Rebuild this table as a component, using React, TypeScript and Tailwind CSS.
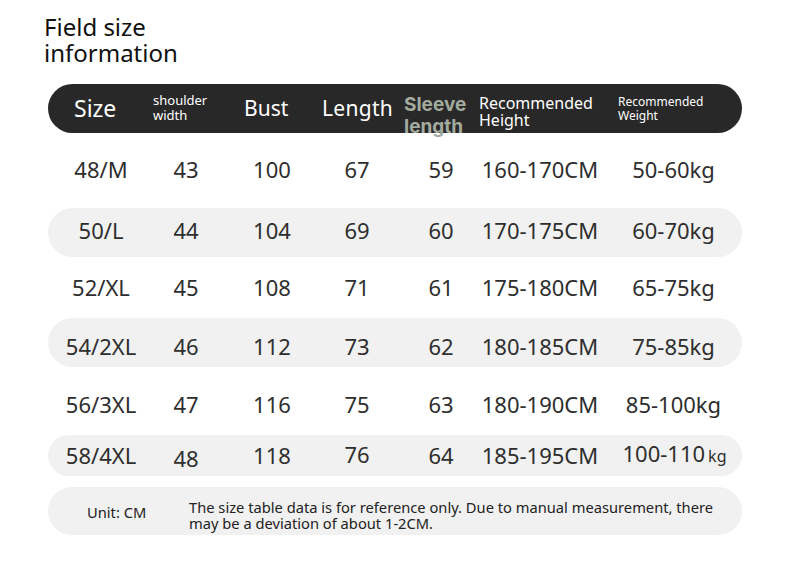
import React from 'react';

type Row = {
  size: string;
  shoulder: string;
  bust: string;
  length: string;
  sleeve: string;
  height: string;
  weight: React.ReactNode;
  shaded: boolean;
  rowClass: string;
};

const rows: Row[] = [
  { size: '48/M', shoulder: '43', bust: '100', length: '67', sleeve: '59', height: '160-170CM', weight: '50-60kg', shaded: false, rowClass: 'mt-[13px] h-[49px] pb-[2px]' },
  { size: '50/L', shoulder: '44', bust: '104', length: '69', sleeve: '60', height: '170-175CM', weight: '60-70kg', shaded: true, rowClass: 'mt-[13px] h-[49px] pb-[5px]' },
  { size: '52/XL', shoulder: '45', bust: '108', length: '71', sleeve: '61', height: '175-180CM', weight: '65-75kg', shaded: false, rowClass: 'mt-[7px] h-[49px] pb-[2px]' },
  { size: '54/2XL', shoulder: '46', bust: '112', length: '73', sleeve: '62', height: '180-185CM', weight: '75-85kg', shaded: true, rowClass: 'mt-[5px] h-[49px] pt-[8px]' },
  { size: '56/3XL', shoulder: '47', bust: '116', length: '75', sleeve: '63', height: '180-190CM', weight: '85-100kg', shaded: false, rowClass: 'mt-[14px] h-[49px] pb-[2px]' },
];

const cell = 'flex justify-center whitespace-nowrap';

function DataRow({ r }: { r: Row }) {
  return (
    <div
      className={`grid grid-cols-[106px_64px_108px_62px_106px_92px_155px] items-center rounded-full ${r.rowClass} ${r.shaded ? 'bg-[#f1f1f1]' : ''}`}
    >
      <div className={cell}>{r.size}</div>
      <div className={cell}>{r.shoulder}</div>
      <div className={cell}>{r.bust}</div>
      <div className={cell}>{r.length}</div>
      <div className={cell}>{r.sleeve}</div>
      <div className={cell}>{r.height}</div>
      <div className={`${cell} pl-[20px]`}>{r.weight}</div>
    </div>
  );
}

export default function App() {
  return (
    <div className="w-[790px] h-[570px] bg-white overflow-hidden font-['Noto_Sans',sans-serif]">
      <div className="pl-[44px] pt-[14px] text-[24px] leading-[26px] text-[#111]">
        Field size
        <br />
        information
      </div>

      <div className="mx-[48px] mt-[18px] text-[22px] text-[#2e2e2e]">
        <div className="grid grid-cols-[105px_91px_78px_83px_74px_139px_1fr] items-center h-[49px] rounded-full bg-[#282828] text-white">
          <div className="pl-[26px] text-[23px] -mt-[5px]">Size</div>
          <div className="text-[13px] leading-[15px] -mt-[6px]">
            shoulder
            <br />
            width
          </div>
          <div className="text-[21px] -mt-[5px]">Bust</div>
          <div className="text-[21px] tracking-[0.3px] -mt-[5px]">Length</div>
          <div className="font-['Inter',sans-serif] font-bold text-[19px] leading-[22px] text-[#a3ab9f] pt-[10px] -ml-[1px]">
            Sleeve
            <br />
            length
          </div>
          <div className="text-[16px] leading-[17px] pt-[1px]">
            Recommended
            <br />
            Height
          </div>
          <div className="text-[12px] leading-[14px] -mt-[5px]">
            Recommended
            <br />
            Weight
          </div>
        </div>

        {rows.map((r) => (
          <DataRow key={r.size} r={r} />
        ))}

        <div className="mt-[5px] h-[41px] grid grid-cols-[106px_64px_108px_62px_106px_92px_155px] items-center rounded-full bg-[#f1f1f1]">
          <div className={cell}>58/4XL</div>
          <div className={`${cell} translate-y-[3px]`}>48</div>
          <div className={cell}>118</div>
          <div className={`${cell} -translate-y-[1px]`}>76</div>
          <div className={cell}>64</div>
          <div className={cell}>185-195CM</div>
          <div className={`${cell} pl-[22px] -translate-y-[2px] items-baseline`}>
            100-110<span className="text-[16px] ml-[3px]">kg</span>
          </div>
        </div>

        <div className="mt-[11px] h-[48px] flex items-center rounded-full bg-[#f1f1f1] text-[14.7px] leading-[16px] text-[#222]">
          <div className="w-[141px] pl-[39px] pt-[1px]">Unit: CM</div>
          <div className="pt-[8px]">
            The size table data is for reference only. Due to manual measurement, there
            <br />
            may be a deviation of about 1-2CM.
          </div>
        </div>
      </div>
    </div>
  );
}
